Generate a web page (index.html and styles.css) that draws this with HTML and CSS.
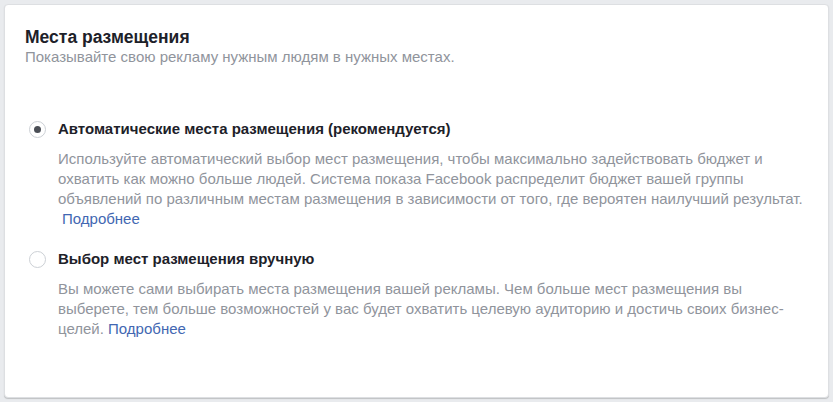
FILE: index.html
```html
<!DOCTYPE html>
<html lang="ru">
  <head>
    <meta charset="UTF-8" />
    <meta name="viewport" content="width=device-width, initial-scale=1.0" />
    <title>Места размещения</title>
    <link rel="stylesheet" href="styles.css">
  </head>
  <body>
    <div class="card">
      <div class="card-header">
        <h2>Места размещения</h2>
        <p>Показывайте свою рекламу нужным людям в нужных местах.</p>
      </div>
      <ul class="placement">
        <li class="option">
          <label class="option-label">
            <span class="radio checked"></span>
            Автоматические места размещения (рекомендуется)
          </label>
          <p class="option-desc">
            Используйте автоматический выбор мест размещения, чтобы максимально задействовать бюджет и
            охватить как можно больше людей. Система показа Facebook распределит бюджет вашей группы
            объявлений по различным местам размещения в зависимости от того, где вероятен наилучший результат.
            <a href="#" class="more">Подробнее</a>
          </p>
        </li>
        <li class="option">
          <label class="option-label">
            <span class="radio"></span>
            Выбор мест размещения вручную
          </label>
          <p class="option-desc">
            Вы можете сами выбирать места размещения вашей рекламы. Чем больше мест размещения вы
            выберете, тем больше возможностей у вас будет охватить целевую аудиторию и достичь своих бизнес-целей.
            <a href="#">Подробнее</a>
          </p>
        </li>
      </ul>
    </div>
  </body>
</html>
```

FILE: styles.css
```css
* {
  box-sizing: border-box;
}

body {
  margin: 0;
  padding: 4px;
  background: #e9ebee;
  font-family: "Liberation Sans", Arial, sans-serif;
  color: #1d2129;
}

.card {
  height: 394px;
  background: #fff;
  border: 1px solid #dddfe2;
  border-radius: 4px;
  box-shadow: 0 1px 1px rgba(0, 0, 0, 0.18);
  padding: 22px 20px 0 20px;
}

.card-header h2 {
  margin: 0;
  font-size: 17.5px;
  line-height: 20px;
  font-weight: bold;
}

.card-header p {
  margin: 0;
  font-size: 15px;
  line-height: 20px;
  color: #90949c;
}

.placement {
  list-style: none;
  margin: 0;
  padding: 0;
  margin-top: 53px;
}

.option {
  margin-bottom: 21px;
}

.option-label {
  display: flex;
  align-items: center;
  font-size: 15px;
  line-height: 18px;
  font-weight: bold;
  cursor: pointer;
}

.radio {
  width: 17px;
  height: 17px;
  margin-left: 4px;
  margin-right: 12px;
  border: 1px solid #ccd0d5;
  border-radius: 50%;
  display: flex;
  align-items: center;
  justify-content: center;
  flex-shrink: 0;
}

.radio.checked::after {
  content: "";
  width: 7px;
  height: 7px;
  border-radius: 50%;
  background: #4b4f56;
}

.option-desc {
  margin: 11px 0 0 0;
  padding-left: 33px;
  font-size: 15px;
  line-height: 20px;
  color: #90949c;
}

.option-desc a {
  color: #4267b2;
  text-decoration: none;
}

.option-desc a.more {
  display: inline-block;
  margin-left: 4px;
}
```
